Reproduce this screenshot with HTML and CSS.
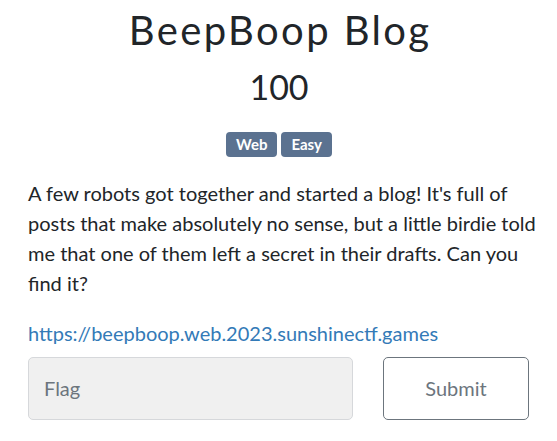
FILE: index.html
```html
<!DOCTYPE html>
<html lang="en">
<head>
<meta charset="utf-8">
<title>BeepBoop Blog</title>
<link rel="stylesheet" href="styles.css">
</head>
<body>
<div class="challenge">
  <h2 class="challenge-name">BeepBoop Blog</h2>
  <h3 class="challenge-value">100</h3>
  <div class="tags">
    <span class="badge">Web</span>
    <span class="badge">Easy</span>
  </div>
  <div class="description">
    <p>A few robots got together and started a blog! It's full of posts that make absolutely no sense, but a little birdie told me that one of them left a secret in their drafts. Can you find it?</p>
    <p class="link-line"><a href="#">https://beepboop.web.2023.sunshinectf.games</a></p>
  </div>
  <form class="submit-row">
    <input class="flag-input" type="text" placeholder="Flag">
    <button class="submit-btn" type="button">Submit</button>
  </form>
</div>
</body>
</html>
```

FILE: styles.css
```css
html, body {
  margin: 0;
  padding: 0;
  background: #ffffff;
}

body {
  font-family: Lato, "Open Sans", sans-serif;
  color: #212529;
}

.challenge {
  padding: 6px 27px 0 28px;
}

.challenge-name {
  margin: 0;
  font-size: 40px;
  font-weight: 400;
  line-height: 48px;
  letter-spacing: 2.4px;
  text-align: center;
  padding-left: 2.4px;
}

.challenge-value {
  margin: 11.5px 0 0;
  font-size: 34px;
  font-weight: 400;
  line-height: 42px;
  text-align: center;
}

.tags {
  display: flex;
  justify-content: center;
  gap: 4px;
  margin-top: 24px;
}

.badge {
  display: inline-flex;
  align-items: center;
  height: 25px;
  padding: 0 10px;
  background: #5b7290;
  color: #ffffff;
  font-size: 15px;
  font-weight: 700;
  border-radius: 4px;
}

.description {
  margin-top: 21px;
  margin-right: -12px;
}

.description p {
  margin: 0;
  font-size: 20px;
  line-height: 30px;
}

.description .link-line {
  margin-top: 20px;
}

.description a {
  color: #337ab7;
  text-decoration: none;
}

.submit-row {
  display: grid;
  grid-template-columns: 325px 146px;
  gap: 30px;
  margin-top: 9px;
}

.flag-input {
  box-sizing: border-box;
  height: 63px;
  margin: 0;
  padding: 0 15px;
  background: #f0f0f0;
  border: 1px solid #d6d8db;
  border-radius: 5px;
  font-family: Lato, "Open Sans", sans-serif;
  font-size: 20px;
  color: #495057;
  outline: none;
}

.flag-input::placeholder {
  color: #6c757d;
  opacity: 1;
}

.submit-btn {
  box-sizing: border-box;
  height: 63px;
  margin: 0;
  background: #ffffff;
  border: 1px solid #6c757d;
  border-radius: 5px;
  font-family: Lato, "Open Sans", sans-serif;
  font-size: 20px;
  color: #6c757d;
  cursor: pointer;
}
```
